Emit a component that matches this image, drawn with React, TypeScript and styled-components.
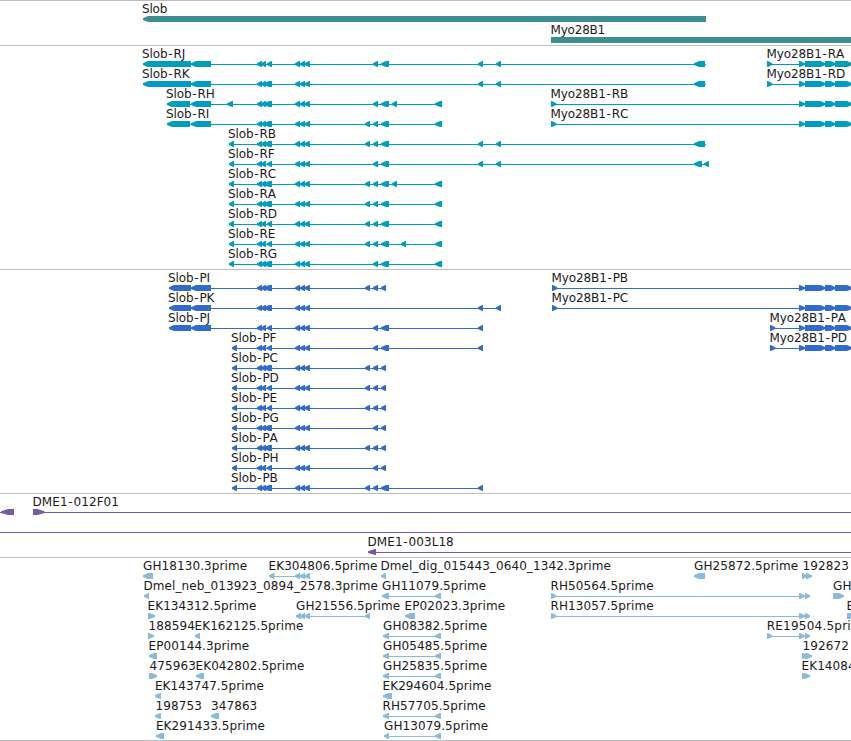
import React from 'react';
import styled, { createGlobalStyle } from 'styled-components';

const GlobalStyle = createGlobalStyle`
  body {
    margin: 0;
    background: #fff;
  }
`;

const Browser = styled.main`
  display: flex;
  flex-direction: column;
  width: 851px;
  height: 741px;
  overflow: hidden;
  background: #fff;
  border-bottom: 1px solid #bebebe;
  box-sizing: border-box;
`;

const TrackPanel = styled.section<{ $height: number }>`
  display: flex;
  flex-direction: column;
  flex: none;
  height: ${(props) => props.$height}px;
  box-sizing: border-box;
  border-top: 1px solid #bebebe;
  overflow: hidden;
`;

const Lane = styled.svg<{ $color: string; $pitch: number }>`
  display: block;
  flex: none;
  width: 851px;
  height: ${(props) => props.$pitch}px;
  overflow: visible;
  fill: ${(props) => props.$color};
`;

const Label = styled.text<{ $spacing: number }>`
  fill: #1a1a1a;
  font-family: 'DejaVu Sans', sans-serif;
  font-size: 12px;
  font-kerning: none;
  letter-spacing: ${(props) => props.$spacing}px;
  white-space: pre;
`;

const Dash = styled.tspan`
  letter-spacing: 0.9px;
`;

type Span = [number, number];

interface Feature {
  name?: string;
  x?: number;
  dir?: 'left' | 'right' | 'none';
  line?: Span;
  exons?: Span[];
  spacing?: number;
}

interface Track {
  id: string;
  color: string;
  height: number;
  pitch?: number;
  tip?: number;
  spacing: number;
  rows: Feature[][];
}

const EDGE = 851;

// exon blocks shared by the isoforms
const A: Span[] = [[257, 262], [261, 266], [267, 272]];
const B: Span[] = [[257, 262], [261, 266], [264, 272]];
const C: Span[] = [[295, 300], [300, 305], [304.5, 310]];
const E365: Span = [365, 370];
const E373: Span = [373, 378];
const E381: Span = [381, 389];
const E381S: Span = [381, 386];
const E392: Span = [392, 397];
const E435: Span = [435, 442];
const E478: Span = [478, 483];
const E496: Span = [496, 501];
const E694: Span = [694, 705];
const MYO: Span[] = [[799, 805], [805, 825.5], [825, 835.5], [835, 852]];

const left = (name: string, x: number, exons: Span[], end?: number): Feature => ({
  name,
  x,
  exons,
  dir: 'left',
  line: [exons[0][0] + 2, end ?? exons[exons.length - 1][1]],
});

const right = (name: string, x: number, exons: Span[], spacing?: number): Feature => ({
  name,
  x,
  exons,
  spacing,
  dir: 'right',
  line: [exons[0][0], exons[exons.length - 1][1] - 2],
});

const slobR = (name: string, exons: Span[], end?: number) => left(name, 228, [[229, 234], ...exons], end);
const slobP = (name: string, exons: Span[]) => left(name, 231, [[232, 237], ...exons]);
const longR: Span[] = [[143, 191], [191, 211]];
const shortR: Span[] = [[167, 190], [191, 211]];
const longP: Span[] = [[169, 191], [191, 211]];
const cdna = (name: string, x: number, start = 383) => left(name, x, [[start, 389], [435, 441]]);

const tracks: Track[] = [
  {
    id: 'genes',
    color: '#3d8d93',
    height: 45,
    pitch: 21,
    spacing: -0.2,
    rows: [
      [{ name: 'Slob', x: 142, dir: 'left', exons: [[143, 706]] }],
      [{ name: 'Myo28B1', x: 551, dir: 'none', exons: [[551, EDGE]] }],
    ],
  },
  {
    id: 'transcripts',
    color: '#009dbf',
    height: 224,
    spacing: -0.1,
    rows: [
      [
        left('Slob-RJ', 142, [...longR, ...A, ...C, E373, E381, E478, E496, E694], 706),
        right('Myo28B1-RA', 767, [[767, 772.3], ...MYO]),
      ],
      [
        left('Slob-RK', 142, [...longR, ...B, ...C, E478, E496, E694], 706),
        right('Myo28B1-RD', 767, [[767, 772.3], ...MYO]),
      ],
      [
        left('Slob-RH', 166, [...shortR, [227, 233], ...B, ...C, E373, E381, E392, E435]),
        right('Myo28B1-RB', 551, [[551, 556.3], ...MYO]),
      ],
      [
        left('Slob-RI', 166, [...shortR, ...B, ...C, E365, E373, E381, E435]),
        right('Myo28B1-RC', 551, [[551, 556.3], ...MYO]),
      ],
      [slobR('Slob-RB', [...B, ...C, E365, E373, E381, E478, E496, E694], 706)],
      [slobR('Slob-RF', [...A, ...C, E373, E381, E478, E496, [694, 702], [704, 709]])],
      [slobR('Slob-RC', [...B, ...C, E365, E373, E381, E392, E435])],
      [slobR('Slob-RA', [...B, ...C, E365, E373, E381, E435])],
      [slobR('Slob-RD', [...A, ...C, E365, E373, E381, E435])],
      [slobR('Slob-RE', [...A, ...C, E365, E373, E381, [401, 406], E435])],
      [slobR('Slob-RG', [...B, ...C, E373, E381, E435])],
    ],
  },
  {
    id: 'proteins',
    color: '#316ccc',
    height: 224,
    spacing: -0.1,
    rows: [
      [
        left('Slob-PI', 168, [...longP, ...B, ...C, E365, E373, E381S]),
        right('Myo28B1-PB', 552, [[552, 557.3], ...MYO]),
      ],
      [
        left('Slob-PK', 168, [...longP, ...B, ...C, E478, E496]),
        right('Myo28B1-PC', 552, [[552, 557.3], ...MYO]),
      ],
      [
        left('Slob-PJ', 168, [...longP, ...A, ...C, E373, E381, E478]),
        right('Myo28B1-PA', 770, [[770, 775.3], ...MYO]),
      ],
      [
        slobP('Slob-PF', [...A, ...C, E373, E381, E478]),
        right('Myo28B1-PD', 770, [[770, 775.3], ...MYO]),
      ],
      [slobP('Slob-PC', [...B, ...C, E365, E373, E381S])],
      [slobP('Slob-PD', [...A, ...C, E365, E373, E381S])],
      [slobP('Slob-PE', [...A, ...C, E365, E373, E381S])],
      [slobP('Slob-PG', [...B, ...C, E373, E381S])],
      [slobP('Slob-PA', [...B, ...C, E365, E373, E381S])],
      [slobP('Slob-PH', [...A, ...C, E373, E381S])],
      [slobP('Slob-PB', [...B, ...C, E365, E373, E381, E478])],
    ],
  },
  {
    id: 'bacs',
    color: '#7459a6',
    height: 64,
    tip: 7,
    spacing: 0.07,
    rows: [
      [
        { dir: 'left', line: [0, 14], exons: [[1, 14]] },
        { name: 'DME1-012F01', x: 33, dir: 'right', line: [33, EDGE], exons: [[33, 44.5]] },
      ],
      [{ line: [0, EDGE] }],
      [{ name: 'DME1-003L18', x: 368, dir: 'left', line: [369, EDGE], exons: [[368, 376]] }],
    ],
  },
  {
    id: 'ests',
    color: '#88bbdc',
    height: 183,
    spacing: 0.09,
    rows: [
      [
        left('GH18130.3prime', 143, [[143, 153]]),
        left('EK304806.5prime', 269, [[269, 274.5], ...C]),
        left('Dmel_dig_015443_0640_1342.3prime', 381, [[381, 386]]),
        left('GH25872.5prime', 694, [[694, 705]]),
        right('192823', 802.6, [[802, 807], [806, 812]]),
      ],
      [
        left('Dmel_neb_013923_0894_2578.3prime', 144, [[144, 149]]),
        cdna('GH11079.5prime', 382, 382),
        right('RH50564.5prime', 551, [[551, 556.3], [799, 805], [805, 810]]),
        right('GH', 833, [[833, 844]]),
      ],
      [
        right('EK134312.5prime', 148, [[148, 155]]),
        left('GH21556.5prime', 296, [[296, 301], [300, 305], [304.5, 310], E365]),
        left('EP02023.3prime', 405, [[405, 415]]),
        right('RH13057.5prime', 551, [[551, 556.3], [799, 805], [805, 810]]),
        right('E', 847, [[847, 858]]),
      ],
      [
        right('188594', 148.6, [[148, 154]]),
        left('EK162125.5prime', 195, [[195, 200]]),
        cdna('GH08382.5prime', 383),
        right('RE19504.5prime', 767.2, [[767, 772.3], [799, 805], [805, 810]], 0.23),
      ],
      [
        left('EP00144.3prime', 149, [[149, 157]]),
        cdna('GH05485.5prime', 383),
        right('192672', 802.6, [[802, 807], [805, 812]]),
      ],
      [
        right('475963', 149.6, [[149, 157]]),
        left('EK042802.5prime', 196, [[196, 204]]),
        cdna('GH25835.5prime', 383),
        right('EK14084', 802, [[802, 807], [804, 810]]),
      ],
      [
        left('EK143747.5prime', 155.4, [[155, 161]]),
        left('EK294604.5prime', 383, [[383, 392]]),
      ],
      [
        left('198753', 155.6, [[155, 161]]),
        left('347863', 211, [[211, 219]]),
        cdna('RH57705.5prime', 383),
      ],
      [
        left('EK291433.5prime', 156.4, [[156, 164]]),
        cdna('GH13079.5prime', 384, 384),
      ],
    ],
  },
];

// exon block with a slightly blunt arrow head on its leading end
const exonPoints = ([a, b]: Span, dir: Feature['dir'], size: number) => {
  const tip = Math.min(size, b - a - 0.8);
  if (dir === 'left') {
    return `${a},17.2 ${a + tip},15 ${b},15 ${b},21 ${a + tip},21 ${a},19`;
  }
  if (dir === 'right') {
    return `${a},15 ${b - tip},15 ${b},17.2 ${b},19 ${b - tip},21 ${a},21`;
  }
  return `${a},15 ${b},15 ${b},21 ${a},21`;
};

interface FeatureGlyphProps {
  feature: Feature;
  tip: number;
  spacing: number;
}

const FeatureGlyph: React.FC<FeatureGlyphProps> = ({ feature, tip, spacing }) => {
  const { name = '', x = 0, dir, line, exons = [] } = feature;
  const [head, tail] = name.split('-');
  // letters with a straight stem sit a little closer to the feature start
  const labelX = /^[DEMR]/.test(name) ? x - 0.5 : x;

  return (
    <g>
      {line && <rect x={line[0]} y={18} width={line[1] - line[0]} height={1} />}
      {exons.map((exon) => (
        <polygon key={exon[0]} points={exonPoints(exon, dir, tip)} />
      ))}
      {name && (
        <Label x={labelX} y={12} $spacing={feature.spacing ?? spacing}>
          {head}
          {tail && <Dash dx={0.7}>-</Dash>}
          {tail}
        </Label>
      )}
    </g>
  );
};

const App: React.FC = () => {
  return (
    <>
      <GlobalStyle />
      <Browser>
        {tracks.map((track) => (
          <TrackPanel key={track.id} $height={track.height}>
            {track.rows.map((row, index) => (
              <Lane key={index} $color={track.color} $pitch={track.pitch ?? 20}>
                {row.map((feature, i) => (
                  <FeatureGlyph key={i} feature={feature} tip={track.tip ?? 5} spacing={track.spacing} />
                ))}
              </Lane>
            ))}
          </TrackPanel>
        ))}
      </Browser>
    </>
  );
};

export default App;
